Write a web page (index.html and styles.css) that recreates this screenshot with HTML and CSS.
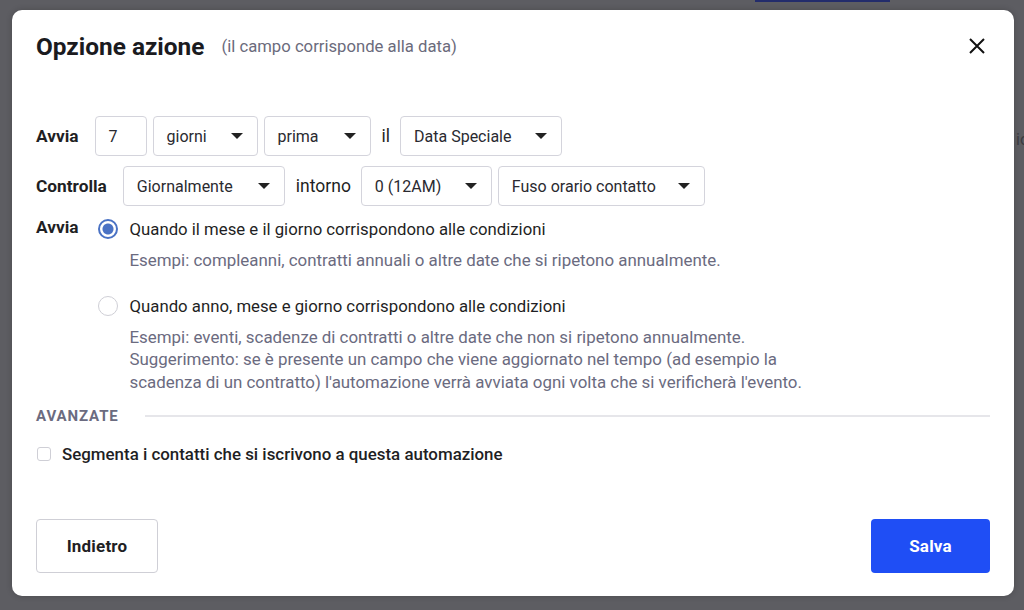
FILE: index.html
```html
<!DOCTYPE html>
<html lang="it">
	<head>
		<meta charset="UTF-8" />
		<meta name="viewport" content="width=device-width, initial-scale=1.0" />
		<title>Opzione azione</title>
		<link rel="stylesheet" href="styles.css">
	</head>
	<body>
		<div class="backdrop">
			<div class="behind-button"></div>
			<div class="behind-text">io</div>

			<div class="modal">
				<div class="modal-header">
					<h1 class="modal-title">Opzione azione</h1>
					<span class="modal-subtitle">(il campo corrisponde alla data)</span>
					<button class="close-btn" aria-label="Chiudi">
						<svg width="16" height="16" viewBox="0 0 16 16">
							<path d="M1 1 L15 15 M15 1 L1 15" stroke="#111" stroke-width="2" fill="none" />
						</svg>
					</button>
				</div>

				<div class="modal-body">
					<div class="field-row">
						<span class="row-label">Avvia</span>
						<div class="text-box w-num">7</div>
						<div class="select-box w-days">giorni <span class="caret"></span></div>
						<div class="select-box w-when">prima <span class="caret"></span></div>
						<span class="joiner">il</span>
						<div class="select-box w-field">Data Speciale <span class="caret"></span></div>
					</div>

					<div class="field-row">
						<span class="row-label">Controlla</span>
						<div class="select-box w-freq">Giornalmente <span class="caret"></span></div>
						<span class="joiner">intorno</span>
						<div class="select-box w-hour">0 (12AM) <span class="caret"></span></div>
						<div class="select-box w-zone">Fuso orario contatto <span class="caret"></span></div>
					</div>

					<div class="trigger-row">
						<span class="row-label">Avvia</span>
						<div class="options">
							<div class="option">
								<span class="radio checked"></span>
								<div class="option-text">
									<div class="option-title">Quando il mese e il giorno corrispondono alle condizioni</div>
									<div class="option-desc">Esempi: compleanni, contratti annuali o altre date che si ripetono annualmente.</div>
								</div>
							</div>
							<div class="option">
								<span class="radio"></span>
								<div class="option-text">
									<div class="option-title">Quando anno, mese e giorno corrispondono alle condizioni</div>
									<div class="option-desc">
										Esempi: eventi, scadenze di contratti o altre date che non si ripetono annualmente.<br>
										Suggerimento: se è presente un campo che viene aggiornato nel tempo (ad esempio la scadenza di un contratto) l'automazione verrà avviata ogni volta che si verificherà l'evento.
									</div>
								</div>
							</div>
						</div>
					</div>

					<div class="section-title">
						<span>Avanzate</span>
						<div class="section-line"></div>
					</div>

					<label class="check-row">
						<span class="checkbox"></span>
						Segmenta i contatti che si iscrivono a questa automazione
					</label>
				</div>

				<div class="modal-footer">
					<button class="btn btn-secondary">Indietro</button>
					<button class="btn btn-primary">Salva</button>
				</div>
			</div>
		</div>
	</body>
</html>
```

FILE: styles.css
```css
body {
	margin: 0;
	font-family: 'Roboto', 'Liberation Sans', sans-serif;
	color: #1f1f24;
	background-color: #5d5d62;
}

.backdrop {
	position: relative;
	height: 610px;
	padding: 10px 10px 14px 12px;
	box-sizing: border-box;
	display: flex;
	background-color: #5d5d62;
	overflow: hidden;
}

.behind-button {
	position: absolute;
	top: 0;
	left: 755px;
	width: 135px;
	height: 2px;
	background-color: #232c6b;
}

.behind-text {
	position: absolute;
	top: 130px;
	left: 1016px;
	font-size: 16px;
	color: #3b3b40;
}

.modal {
	flex: 1;
	display: flex;
	flex-direction: column;
	background-color: #fff;
	border-radius: 10px;
	padding: 21px 24px 23px 24px;
	box-shadow: 0 0 6px rgba(0, 0, 0, 0.2);
}

.modal-header {
	display: flex;
	align-items: center;
	height: 30px;
}

.modal-title {
	margin: 0;
	font-size: 24.4px;
	font-weight: 700;
	color: #1b1b1f;
}

.modal-subtitle {
	margin-left: 17px;
	font-size: 16.7px;
	color: #6b6b7c;
}

.close-btn {
	margin-left: auto;
	margin-right: 5px;
	padding: 0;
	border: none;
	background: none;
	display: flex;
	cursor: pointer;
}

.modal-body {
	margin-top: 55px;
	font-size: 16.75px;
}

.field-row {
	display: flex;
	align-items: center;
	gap: 6px;
	margin-bottom: 10px;
}

.row-label {
	font-size: 17.3px;
	font-weight: 700;
	margin-right: 10px;
	line-height: 24px;
}

.joiner {
	margin: 0 4px 0 5px;
	font-size: 17.5px;
}

.text-box,
.select-box {
	height: 40px;
	box-sizing: border-box;
	border: 1px solid #d4d4dc;
	border-radius: 4px;
	display: flex;
	align-items: center;
	padding: 0 14px 0 13px;
	font-size: 16px;
	color: #2a2a30;
}

.select-box {
	justify-content: space-between;
}

.caret {
	width: 0;
	height: 0;
	border-left: 6px solid transparent;
	border-right: 6px solid transparent;
	border-top: 6px solid #222;
}

.w-num { width: 52px; }
.w-days { width: 105px; }
.w-when { width: 107px; }
.w-field { width: 162px; }
.w-freq { width: 162px; }
.w-hour { width: 131px; }
.w-zone { width: 207px; }

.trigger-row {
	display: flex;
	margin-top: 11px;
}

.trigger-row .row-label {
	margin-right: 19px;
	margin-top: -2px;
}

.option {
	display: flex;
	gap: 12px;
	margin-bottom: 22px;
}

.radio {
	width: 20px;
	height: 20px;
	box-sizing: border-box;
	border: 1px solid #cfcfd6;
	border-radius: 50%;
	margin-top: 2px;
	flex-shrink: 0;
}

.radio.checked {
	border: 2px solid #4a72c4;
	background: radial-gradient(circle, #4a72c4 0 5px, #fff 6px);
}

.option-title {
	line-height: 24px;
	color: #1f1f24;
}

.option-desc {
	margin-top: 8px;
	font-size: 16.9px;
	line-height: 22.5px;
	color: #6b6b7f;
	max-width: 680px;
}

.section-title {
	display: flex;
	align-items: center;
	gap: 26px;
	margin-top: -9px;
	font-size: 15px;
	letter-spacing: 0.9px;
	font-weight: 700;
	text-transform: uppercase;
	color: #6b6b80;
	line-height: 20px;
}

.section-line {
	flex: 1;
	height: 2px;
	background-color: #e6e6ea;
}

.check-row {
	display: flex;
	align-items: center;
	gap: 11px;
	margin-top: 16px;
	font-size: 16.9px;
	line-height: 24px;
	font-weight: 500;
	color: #1f1f24;
}

.checkbox {
	width: 12px;
	height: 12px;
	border: 1px solid #cfcfd6;
	border-radius: 3px;
	margin-left: 1px;
}

.modal-footer {
	margin-top: auto;
	display: flex;
	justify-content: space-between;
}

.btn {
	height: 54px;
	border-radius: 4px;
	font-family: inherit;
	font-size: 17px;
	letter-spacing: 0.2px;
	font-weight: 700;
	cursor: pointer;
}

.btn-secondary {
	width: 122px;
	background-color: #fff;
	border: 1px solid #cfcfd6;
	color: #1f1f24;
}

.btn-primary {
	width: 119px;
	background-color: #1f4ef5;
	border: none;
	color: #fff;
}
```
